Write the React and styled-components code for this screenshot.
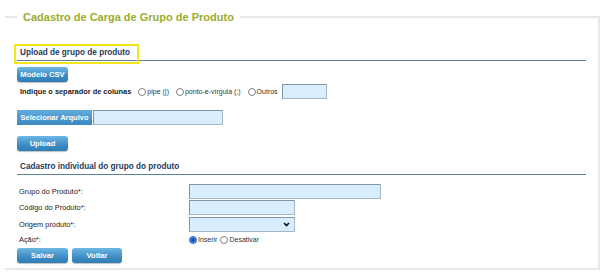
import React from 'react';
import styled, { createGlobalStyle } from 'styled-components';

const GlobalStyle = createGlobalStyle`
  body {
    margin: 0;
    background: #ffffff;
    font-family: "Liberation Sans", Arial, sans-serif;
    font-size: 7.4px;
    color: #222222;
  }
`;

const Page = styled.div`
  width: 612px;
  height: 280px;
  padding: 7px 12px 0 5px;
  box-sizing: border-box;
`;

const Fieldset = styled.fieldset`
  margin: 0;
  padding: 0 12px 5px 12px;
  border: 2px solid #e4e9ed;
  border-left: none;
  min-width: 0;
`;

const Legend = styled.legend`
  padding: 0 6px;
  font-size: 11px;
  line-height: 20px;
  font-weight: bold;
  color: #9aad2e;
`;

const SectionTitle = styled.div`
  margin-top: ${({ $top }) => $top}px;
  padding: 0 3px 1px;
  height: 12px;
  line-height: 12px;
  font-size: 8.2px;
  font-weight: bold;
  color: #1f3b5c;
  border-bottom: 1px solid #5d8199;
`;

const Highlight = styled.span`
  position: relative;
  display: inline-block;

  &::after {
    content: '';
    position: absolute;
    left: -6px;
    right: -9px;
    top: -3px;
    bottom: -5px;
    border: 2px solid #f3e51b;
    pointer-events: none;
  }
`;

const Button = styled.button`
  display: block;
  width: ${({ $w }) => $w || 51}px;
  height: 15px;
  padding: 0;
  border: none;
  border-radius: 3px;
  background: linear-gradient(#6db7e3, #3d8cc4 60%, #2f7db5);
  box-shadow: 0 1px 1px rgba(0, 0, 0, 0.25);
  color: #ffffff;
  font-family: inherit;
  font-size: 7.6px;
  font-weight: bold;
  cursor: pointer;
`;

const FileButton = styled.button`
  width: 75px;
  height: 15px;
  padding: 0;
  border: none;
  background: linear-gradient(#62acdc, #3a88c1);
  color: #ffffff;
  font-family: inherit;
  font-size: 7.5px;
  font-weight: bold;
`;

const Block = styled.div`
  margin-top: ${({ $top }) => $top}px;
`;

const Row = styled.div`
  display: flex;
  align-items: center;
  margin-top: ${({ $top }) => $top}px;
`;

const StrongLabel = styled.span`
  margin-left: 3px;
  margin-right: 7px;
  font-size: 7.4px;
  font-weight: bold;
  color: #1a1a1a;
`;

const RadioLabel = styled.label`
  display: inline-flex;
  align-items: center;
  gap: 1px;
  margin-right: ${({ $gap }) => $gap || 0}px;
  font-size: 7px;
  color: #333333;
`;

const Radio = styled.input.attrs({ type: 'radio' })`
  appearance: none;
  width: 8px;
  height: 8px;
  margin: 0;
  border: 1px solid #808080;
  border-radius: 50%;
  background: #ffffff;
  box-sizing: border-box;

  &:checked {
    border-color: #1c6fd6;
    background: radial-gradient(circle, #1f4f9c 0 1.5px, #3d8ae6 1.9px);
  }
`;

const TextInput = styled.input.attrs({ type: 'text' })`
  width: ${({ $w }) => $w}px;
  height: 15px;
  margin: 0 0 0 ${({ $left }) => $left || 0}px;
  padding: 0 3px;
  box-sizing: border-box;
  border: 1px solid #a3b7c6;
  border-top-color: #7f97aa;
  border-left-color: #7f97aa;
  background: #d9edfc;
  font-family: inherit;
  font-size: 8px;
`;

const FormGrid = styled.div`
  display: grid;
  grid-template-columns: 170px 1fr;
  grid-template-rows: repeat(3, 16.5px) 14px;
  align-items: center;
  margin-top: 8px;
  padding-left: 2px;
`;

const FieldLabel = styled.span`
  font-size: 7.4px;
  color: #222222;
`;

const SelectWrap = styled.div`
  position: relative;
  width: 106px;
  height: 15px;
`;

const Select = styled.select`
  appearance: none;
  width: 100%;
  height: 100%;
  margin: 0;
  border: 1px solid #a3b7c6;
  border-top-color: #7f97aa;
  border-left-color: #7f97aa;
  background: #d9edfc;
  font-family: inherit;
  font-size: 8px;
`;

const Chevron = styled.svg`
  position: absolute;
  right: 5px;
  top: 5px;
  pointer-events: none;
`;

const Buttons = styled.div`
  display: flex;
  gap: 4px;
  margin-top: 1px;
`;

export default function App() {
  return (
    <>
      <GlobalStyle />
      <Page>
        <Fieldset>
          <Legend>Cadastro de Carga de Grupo de Produto</Legend>

          <SectionTitle $top={20}>
            <Highlight>Upload de grupo de produto</Highlight>
          </SectionTitle>

          <Block $top={6}>
            <Button>Modelo CSV</Button>
          </Block>

          <Row $top={2}>
            <StrongLabel>Indique o separador de colunas</StrongLabel>
            <RadioLabel $gap={7}>
              <Radio name="sep" />
              pipe (|)
            </RadioLabel>
            <RadioLabel $gap={7}>
              <Radio name="sep" />
              ponto-e-vírgula (;)
            </RadioLabel>
            <RadioLabel $gap={4}>
              <Radio name="sep" />
              Outros
            </RadioLabel>
            <TextInput $w={45} />
          </Row>

          <Row $top={11}>
            <FileButton>Selecionar Arquivo</FileButton>
            <TextInput $w={130} $left={1} />
          </Row>

          <Block $top={11}>
            <Button>Upload</Button>
          </Block>

          <SectionTitle $top={10}>Cadastro individual do grupo do produto</SectionTitle>

          <FormGrid>
            <FieldLabel>Grupo do Produto*:</FieldLabel>
            <TextInput $w={192} />
            <FieldLabel>Código do Produto*:</FieldLabel>
            <TextInput $w={106} />
            <FieldLabel>Origem produto*:</FieldLabel>
            <SelectWrap>
              <Select defaultValue="">
                <option value="" />
              </Select>
              <Chevron width="7" height="5" viewBox="0 0 7 5">
                <path d="M1 1 L3.5 3.6 L6 1" fill="none" stroke="#111" strokeWidth="1.6" />
              </Chevron>
            </SelectWrap>
            <FieldLabel>Ação*:</FieldLabel>
            <Row $top={0}>
              <RadioLabel $gap={3}>
                <Radio name="acao" defaultChecked />
                Inserir
              </RadioLabel>
              <RadioLabel>
                <Radio name="acao" />
                Desativar
              </RadioLabel>
            </Row>
          </FormGrid>

          <Buttons>
            <Button>Salvar</Button>
            <Button $w={50}>Voltar</Button>
          </Buttons>
        </Fieldset>
      </Page>
    </>
  );
}
